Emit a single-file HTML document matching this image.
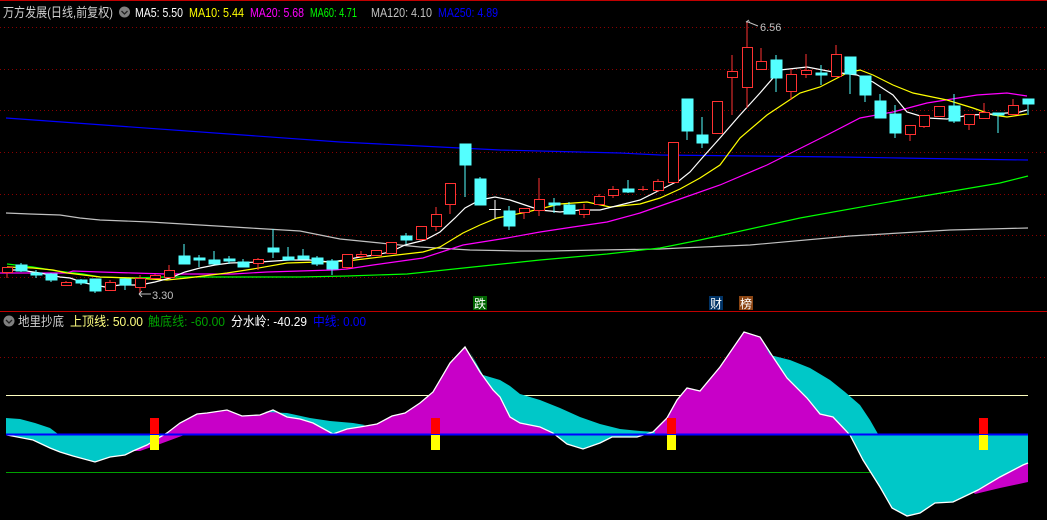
<!DOCTYPE html>
<html><head><meta charset="utf-8"><style>
html,body{margin:0;padding:0;background:#000;}
body{width:1047px;height:520px;overflow:hidden;position:relative;font-family:"Liberation Sans","Noto Sans CJK SC",sans-serif;}
svg{position:absolute;left:0;top:0;}
</style></head><body>
<svg width="1047" height="520" xmlns="http://www.w3.org/2000/svg" font-family="Liberation Sans, Noto Sans CJK SC, sans-serif">
<defs>
<clipPath id="up"><rect x="0" y="312" width="1047" height="122"/></clipPath>
<clipPath id="dn"><rect x="0" y="434" width="1047" height="90"/></clipPath>
</defs>
<rect width="1047" height="520" fill="#000"/>
<line x1="0" y1="0.5" x2="1047" y2="0.5" stroke="#c00000"/>
<g stroke="#8a0000" stroke-dasharray="1 3">
<line x1="0" y1="27.5" x2="1047" y2="27.5"/><line x1="0" y1="69.5" x2="1047" y2="69.5"/>
<line x1="0" y1="110.5" x2="1047" y2="110.5"/><line x1="0" y1="152.5" x2="1047" y2="152.5"/>
<line x1="0" y1="194.5" x2="1047" y2="194.5"/><line x1="0" y1="235.5" x2="1047" y2="235.5"/>
<line x1="0" y1="277.5" x2="1047" y2="277.5"/><line x1="0" y1="357.5" x2="1047" y2="357.5"/>
</g>
<line x1="0" y1="311.5" x2="1047" y2="311.5" stroke="#c00000"/>

<!-- header -->
<g font-size="13">
<text x="3" y="17" fill="#d0d0d0" textLength="110" lengthAdjust="spacingAndGlyphs">万方发展(日线,前复权)</text>
<text x="135" y="17" fill="#ffffff" textLength="48" lengthAdjust="spacingAndGlyphs">MA5: 5.50</text>
<text x="189" y="17" fill="#ffff00" textLength="55" lengthAdjust="spacingAndGlyphs">MA10: 5.44</text>
<text x="250" y="17" fill="#ff00ff" textLength="54" lengthAdjust="spacingAndGlyphs">MA20: 5.68</text>
<text x="310" y="17" fill="#00ff00" textLength="47" lengthAdjust="spacingAndGlyphs">MA60: 4.71</text>
<text x="371" y="17" fill="#c0c0c0" textLength="61" lengthAdjust="spacingAndGlyphs">MA120: 4.10</text>
<text x="438" y="17" fill="#0000ff" textLength="60" lengthAdjust="spacingAndGlyphs">MA250: 4.89</text>
</g>
<circle cx="124.5" cy="12" r="5.5" fill="#808080"/><path d="M121.5 11l3 3 3-3" stroke="#222" stroke-width="1.3" fill="none"/>

<!-- MA lines -->
<g fill="none" stroke-width="1.2">
<polyline stroke="#0000ff" points="6,118 340,142 380,144 420,146 460,148 500,150 540,151 580,152 620,153 660,155 840,157 900,158 960,159 1028,160"/>
<polyline stroke="#c0c0c0" points="6,213 30,214 60,215 80,218 100,220 150,222 200,225 250,228 300,231 340,239 380,243 420,247 470,250 520,251 550,251 600,250 660,249 680,248 750,245 850,236 950,230 1028,228"/>
<polyline stroke="#00ff00" points="7,264 33,267 57,271 83,274 100,277 133,278 167,277 233,277 300,277 347,276 407,274 473,267 540,260 607,254 660,248 700,240 800,218 900,200 1000,183 1028,176"/>
<polyline stroke="#ff00ff" points="0,273 67,273 73,271 100,272 133,273 167,274 233,274 267,272 300,271 333,270 347,269 373,265 423,258 463,245 507,238 540,232 573,227 607,222 640,213 680,199 720,185 767,165 793,152 827,135 860,118 893,112 927,103 977,95 1007,93 1027,96"/>
<polyline stroke="#ffff00" points="7,267 33,268 53,270 67,273 100,277 133,278 167,280 187,278 227,273 253,269 287,263 320,262 347,261 397,255 423,252 440,247 463,233 480,225 497,218 527,212 560,204 587,202 610,207 640,204 660,198 680,189 700,178 720,165 740,138 767,115 800,93 820,87 847,73 860,70 873,75 893,85 913,93 947,100 973,108 993,115 1007,117 1027,114"/>
<polyline stroke="#ffffff" points="6,270 20,270 40,273 60,277 70,278 85,283 95,285 105,287 120,285 140,285 155,282 170,278 185,272 200,268 215,265 230,263 260,262 290,260 310,260 330,262 345,260 360,257 375,255 390,252 405,245 425,240 440,232 455,218 465,208 480,200 495,197 510,200 525,205 540,210 560,212 580,210 600,210 620,205 640,200 660,190 680,180 690,172 703,157 720,138 740,115 760,93 780,70 807,67 833,72 857,75 873,82 893,95 907,112 927,118 947,119 970,115 993,114 1020,112 1027,110"/>
</g>

<!-- candles -->
<g stroke="#ff3232" fill="#000" stroke-width="1">
<line x1="7" y1="267" x2="7" y2="278"/><rect x="2.5" y="267.5" width="10" height="5"/>
<line x1="66" y1="281" x2="66" y2="286"/><rect x="61.5" y="282.5" width="10" height="3"/>
<line x1="110" y1="280" x2="110" y2="290"/><rect x="105.5" y="282.5" width="10" height="8"/>
<line x1="140" y1="275" x2="140" y2="293"/><rect x="135.5" y="278.5" width="10" height="9"/>
<line x1="155" y1="274" x2="155" y2="279"/><rect x="150.5" y="275.5" width="10" height="3"/>
<line x1="169" y1="265" x2="169" y2="277"/><rect x="164.5" y="270.5" width="10" height="7"/>
<line x1="258" y1="258" x2="258" y2="270"/><rect x="253.5" y="259.5" width="10" height="4"/>
<line x1="347" y1="254" x2="347" y2="269"/><rect x="342.5" y="254.5" width="10" height="13"/>
<line x1="361" y1="251" x2="361" y2="258"/><rect x="356.5" y="254.5" width="10" height="2"/>
<line x1="376" y1="250" x2="376" y2="256"/><rect x="371.5" y="250.5" width="10" height="5"/>
<rect x="386.5" y="242.5" width="10" height="11"/>
<line x1="421" y1="226" x2="421" y2="241"/><rect x="416.5" y="226.5" width="10" height="13"/>
<line x1="436" y1="207" x2="436" y2="231"/><rect x="431.5" y="214.5" width="10" height="12"/>
<line x1="450" y1="183" x2="450" y2="214"/><rect x="445.5" y="183.5" width="10" height="21"/>
<line x1="524" y1="208" x2="524" y2="219"/><rect x="519.5" y="208.5" width="10" height="4"/>
<line x1="539" y1="178" x2="539" y2="216"/><rect x="534.5" y="199.5" width="10" height="11"/>
<line x1="584" y1="204" x2="584" y2="218"/><rect x="579.5" y="209.5" width="10" height="5"/>
<line x1="599" y1="194" x2="599" y2="204"/><rect x="594.5" y="196.5" width="10" height="8"/>
<line x1="613" y1="186" x2="613" y2="198"/><rect x="608.5" y="189.5" width="10" height="6"/>
<line x1="643" y1="186" x2="643" y2="191"/><line x1="638" y1="189.5" x2="648" y2="189.5"/>
<line x1="658" y1="179" x2="658" y2="192"/><rect x="653.5" y="181.5" width="10" height="9"/>
<rect x="668.5" y="142.5" width="10" height="40"/>
<line x1="717" y1="101" x2="717" y2="134"/><rect x="712.5" y="101.5" width="10" height="32"/>
<line x1="732" y1="55" x2="732" y2="115"/><rect x="727.5" y="71.5" width="10" height="6"/>
<line x1="747" y1="22" x2="747" y2="108"/><rect x="742.5" y="47.5" width="10" height="40"/>
<line x1="761" y1="48" x2="761" y2="69"/><rect x="756.5" y="61.5" width="10" height="8"/>
<line x1="791" y1="69" x2="791" y2="100"/><rect x="786.5" y="74.5" width="10" height="17"/>
<line x1="806" y1="54" x2="806" y2="78"/><rect x="801.5" y="70.5" width="10" height="4"/>
<line x1="836" y1="45" x2="836" y2="76"/><rect x="831.5" y="54.5" width="10" height="22"/>
<line x1="910" y1="125" x2="910" y2="141"/><rect x="905.5" y="125.5" width="10" height="9"/>
<line x1="924" y1="115" x2="924" y2="128"/><rect x="919.5" y="115.5" width="10" height="11"/>
<rect x="934.5" y="106.5" width="10" height="10"/>
<line x1="969" y1="114" x2="969" y2="130"/><rect x="964.5" y="114.5" width="10" height="10"/>
<line x1="984" y1="103" x2="984" y2="118"/><rect x="979.5" y="112.5" width="10" height="6"/>
<line x1="1013" y1="99" x2="1013" y2="114"/><rect x="1008.5" y="105.5" width="10" height="9"/>
</g>
<g stroke="#54ffff" fill="#54ffff" stroke-width="1">
<line x1="21" y1="263" x2="21" y2="272"/><rect x="16" y="265" width="11" height="6"/>
<line x1="36" y1="270" x2="36" y2="278"/><rect x="31" y="273" width="11" height="2"/>
<line x1="51" y1="273" x2="51" y2="282"/><rect x="46" y="274" width="11" height="6"/>
<line x1="81" y1="279" x2="81" y2="285"/><rect x="76" y="280" width="11" height="3"/>
<line x1="95" y1="279" x2="95" y2="293"/><rect x="90" y="279" width="11" height="12"/>
<line x1="125" y1="278" x2="125" y2="290"/><rect x="120" y="279" width="11" height="6"/>
<line x1="184" y1="244" x2="184" y2="264"/><rect x="179" y="256" width="11" height="8"/>
<line x1="199" y1="255" x2="199" y2="267"/><rect x="194" y="258" width="11" height="2"/>
<line x1="214" y1="251" x2="214" y2="264"/><rect x="209" y="260" width="11" height="4"/>
<line x1="229" y1="256" x2="229" y2="264"/><rect x="224" y="259" width="11" height="2"/>
<line x1="243" y1="259" x2="243" y2="267"/><rect x="238" y="262" width="11" height="5"/>
<line x1="273" y1="229" x2="273" y2="258"/><rect x="268" y="248" width="11" height="4"/>
<line x1="288" y1="247" x2="288" y2="260"/><rect x="283" y="257" width="11" height="3"/>
<line x1="303" y1="249" x2="303" y2="259"/><rect x="298" y="256" width="11" height="3"/>
<line x1="317" y1="256" x2="317" y2="266"/><rect x="312" y="258" width="11" height="6"/>
<line x1="332" y1="259" x2="332" y2="275"/><rect x="327" y="261" width="11" height="8"/>
<line x1="406" y1="233" x2="406" y2="244"/><rect x="401" y="236" width="11" height="4"/>
<line x1="465" y1="144" x2="465" y2="197"/><rect x="460" y="144" width="11" height="21"/>
<line x1="480" y1="177" x2="480" y2="205"/><rect x="475" y="179" width="11" height="26"/>
<line x1="509" y1="206" x2="509" y2="230"/><rect x="504" y="211" width="11" height="15"/>
<line x1="554" y1="198" x2="554" y2="213"/><rect x="549" y="203" width="11" height="2"/>
<line x1="569" y1="202" x2="569" y2="214"/><rect x="564" y="205" width="11" height="9"/>
<line x1="628" y1="180" x2="628" y2="193"/><rect x="623" y="189" width="11" height="3"/>
<line x1="687" y1="99" x2="687" y2="140"/><rect x="682" y="99" width="11" height="32"/>
<line x1="702" y1="117" x2="702" y2="148"/><rect x="697" y="135" width="11" height="8"/>
<line x1="776" y1="55" x2="776" y2="92"/><rect x="771" y="60" width="11" height="18"/>
<line x1="821" y1="65" x2="821" y2="85"/><rect x="816" y="73" width="11" height="2"/>
<line x1="850" y1="57" x2="850" y2="94"/><rect x="845" y="57" width="11" height="17"/>
<line x1="865" y1="76" x2="865" y2="102"/><rect x="860" y="76" width="11" height="19"/>
<line x1="880" y1="94" x2="880" y2="118"/><rect x="875" y="101" width="11" height="17"/>
<line x1="895" y1="105" x2="895" y2="138"/><rect x="890" y="114" width="11" height="19"/>
<line x1="954" y1="94" x2="954" y2="123"/><rect x="949" y="106" width="11" height="15"/>
<line x1="998" y1="113" x2="998" y2="133"/><rect x="993" y="113" width="11" height="2"/>
<line x1="1028" y1="99" x2="1028" y2="115"/><rect x="1023" y="99" width="11" height="5"/>
</g>
<g stroke="#ffffff"><line x1="495" y1="200" x2="495" y2="219"/><line x1="489" y1="209.5" x2="501" y2="209.5"/></g>

<!-- annotations -->
<g fill="#c0c0c0" font-size="11">
<path d="M746 22 h4 M746 22 l3 -2 M748 22 l10 4" stroke="#c0c0c0" fill="none"/>
<text x="760" y="31">6.56</text>
<path d="M139 294 l3 -3 M139 294 l3 3 M139 294 h12" stroke="#c0c0c0" fill="none"/>
<text x="152" y="299">3.30</text>
</g>
<rect x="473" y="296" width="14" height="14" fill="#006400"/><text x="474" y="308" font-size="12" fill="#fff">跌</text>
<rect x="709" y="296" width="14" height="14" fill="#003366"/><text x="710" y="308" font-size="12" fill="#fff">财</text>
<rect x="739" y="296" width="14" height="14" fill="#8b4513"/><text x="740" y="308" font-size="12" fill="#fff">榜</text>

<!-- lower header -->
<circle cx="9" cy="321" r="5.5" fill="#808080"/><path d="M6 320l3 3 3-3" stroke="#222" stroke-width="1.3" fill="none"/>
<g font-size="13">
<text x="18" y="326" fill="#d0d0d0" textLength="46" lengthAdjust="spacingAndGlyphs">地里抄底</text>
<text x="70" y="326" fill="#ffff80" textLength="73" lengthAdjust="spacingAndGlyphs">上顶线: 50.00</text>
<text x="148" y="326" fill="#00a000" textLength="77" lengthAdjust="spacingAndGlyphs">触底线: -60.00</text>
<text x="231" y="326" fill="#ffffff" textLength="76" lengthAdjust="spacingAndGlyphs">分水岭: -40.29</text>
<text x="313" y="326" fill="#0000ff" textLength="53" lengthAdjust="spacingAndGlyphs">中线: 0.00</text>
</g>

<!-- lower panel -->
<line x1="6" y1="395.5" x2="1028" y2="395.5" stroke="#ffffc0"/>
<line x1="6" y1="472.5" x2="1028" y2="472.5" stroke="#00a000"/>
<polygon clip-path="url(#up)" fill="#c800c8" points="6,434 7,435 33,440 50,448 60,452 73,456 95,462 110,457 125,455 133,451 147,445 160,437 167,433 180,423 197,414 207,413 227,410 242,416 260,415 273,410 287,417 300,419 313,423 333,434 347,429 360,427 377,424 392,416 405,413 420,403 433,392 450,363 465,347 480,372 493,390 500,397 510,417 520,423 540,427 553,433 567,444 583,449 600,443 612,437 637,437 653,432 667,418 677,400 687,388 700,391 720,367 744,332 760,337 773,357 787,378 807,398 820,414 833,417 850,435 863,460 880,487 892,508 907,516 920,513 935,503 953,502 978,490 1000,477 1023,465 1028,463 1028,434"/>
<polygon clip-path="url(#dn)" fill="#00c8c8" points="6,434 7,435 33,440 50,448 60,452 73,456 95,462 110,457 125,455 133,451 147,445 160,437 167,433 180,423 197,414 207,413 227,410 242,416 260,415 273,410 287,417 300,419 313,423 333,434 347,429 360,427 377,424 392,416 405,413 420,403 433,392 450,363 465,347 480,372 493,390 500,397 510,417 520,423 540,427 553,433 567,444 583,449 600,443 612,437 637,437 653,432 667,418 677,400 687,388 700,391 720,367 744,332 760,337 773,357 787,378 807,398 820,414 833,417 850,435 863,460 880,487 892,508 907,516 920,513 935,503 953,502 978,490 1000,477 1023,465 1028,463 1028,434"/>
<g fill="#00c8c8">
<polygon points="6,418 20,419 35,423 50,428 58,434 6,434"/>
<polygon points="265,412 287,413 310,418 330,421 353,423 365,425 360,427 347,429 333,434 313,423 300,419 287,417 273,410"/>
<polygon points="470,352 483,375 500,380 510,386 520,394 540,400 560,408 580,417 600,424 620,429 640,431 655,432 655,434 553,434 553,433 540,427 520,423 510,417 500,397 493,390 480,372"/>
<polygon points="760,337 770,355 790,360 810,368 830,380 845,392 860,405 870,420 878,434 850,434 833,417 820,414 807,398 787,378 773,357"/>
</g>
<g fill="#c800c8">
<polygon points="133,451 147,445 160,437 167,434 187,434 160,444 140,451"/>
<polygon points="973,492 1000,477 1023,465 1028,463 1028,482 1000,488 975,494"/>
</g>
<polyline fill="none" stroke="#ffffff" stroke-width="1.3" points="7,435 33,440 50,448 60,452 73,456 95,462 110,457 125,455 133,451 147,445 160,437 167,433 180,423 197,414 207,413 227,410 242,416 260,415 273,410 287,417 300,419 313,423 333,434 347,429 360,427 377,424 392,416 405,413 420,403 433,392 450,363 465,347 480,372 493,390 500,397 510,417 520,423 540,427 553,433 567,444 583,449 600,443 612,437 637,437 653,432 667,418 677,400 687,388 700,391 720,367 744,332 760,337 773,357 787,378 807,398 820,414 833,417 850,435 863,460 880,487 892,508 907,516 920,513 935,503 953,502 978,490 1000,477 1023,465 1028,463"/>
<line x1="6" y1="434.5" x2="1028" y2="434.5" stroke="#0000ff" stroke-width="2"/>
<g>
<rect x="150" y="418" width="9" height="16" fill="#ff0000"/><rect x="150" y="435" width="9" height="15" fill="#ffff00"/>
<rect x="431" y="418" width="9" height="16" fill="#ff0000"/><rect x="431" y="435" width="9" height="15" fill="#ffff00"/>
<rect x="667" y="418" width="9" height="16" fill="#ff0000"/><rect x="667" y="435" width="9" height="15" fill="#ffff00"/>
<rect x="979" y="418" width="9" height="16" fill="#ff0000"/><rect x="979" y="435" width="9" height="15" fill="#ffff00"/>
</g>
</svg>
</body></html>
